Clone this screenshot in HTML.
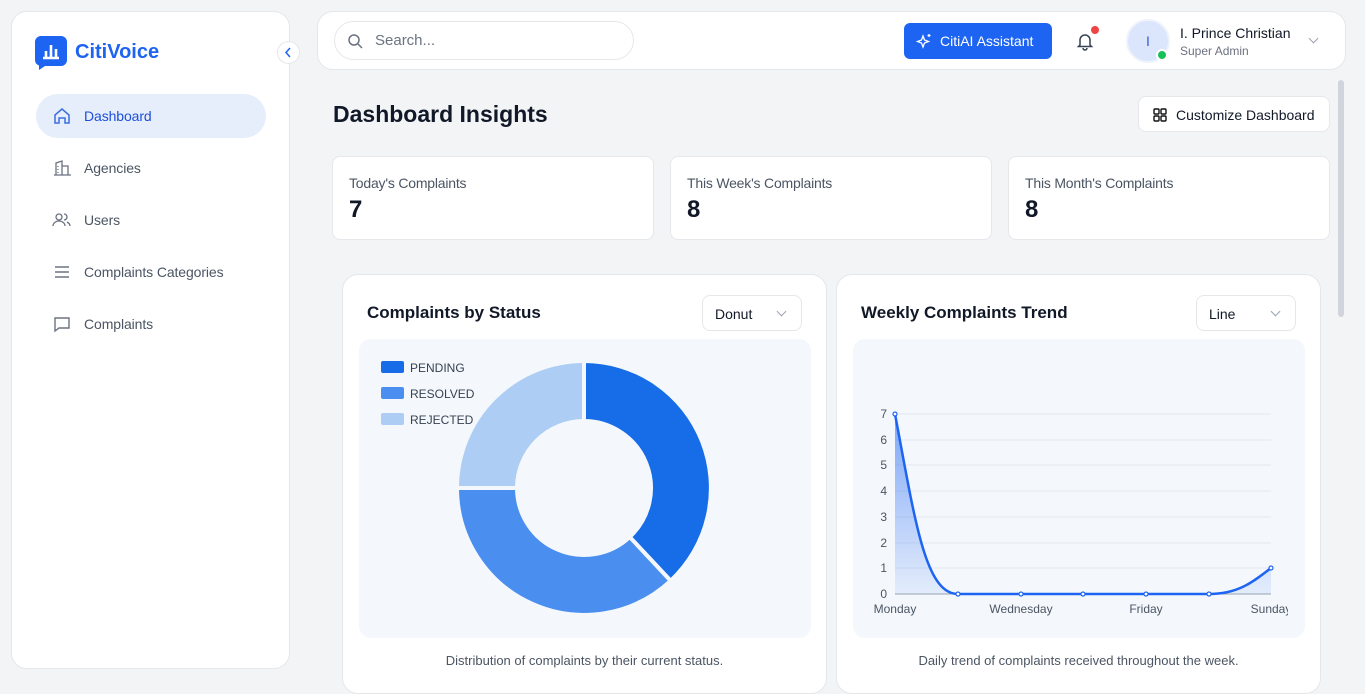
<!DOCTYPE html>
<html><head><meta charset="utf-8"><style>
*{box-sizing:border-box;margin:0;padding:0}
body{width:1365px;height:679px;overflow:hidden;background:#f3f4f6;font-family:"Liberation Sans",sans-serif;color:#111827;position:relative}
.card{position:absolute;background:#fff;border:1px solid #e5e7eb}
.side{left:11px;top:11px;width:279px;height:658px;border-radius:16px}
.nav{position:absolute;left:24px;width:230px;height:44px;border-radius:22px;display:flex;align-items:center;padding-left:16px;font-size:14px;color:#4b5563;letter-spacing:-0.1px}
.nav svg{margin-right:12px}
.nav.act{background:#e6eefc;color:#1d4ed8}
.top{left:317px;top:11px;width:1029px;height:59px;border-radius:16px}
.stat{top:156px;height:84px;width:322px;border-radius:8px;padding:18px 16px}
.stat .l{font-size:14px;color:#4b5563;letter-spacing:-0.2px}
.stat .v{font-size:24px;font-weight:bold;margin-top:5px}
.ch{top:274px;width:485px;height:420px;border-radius:16px}
.ch h3{position:absolute;left:24px;top:28px;font-size:17px}
.sel{position:absolute;top:20px;right:24px;width:100px;height:36px;border:1px solid #e5e7eb;border-radius:8px;font-size:14px;padding:10px 12px}
.sel:after{content:"";position:absolute;right:16px;top:12px;width:6px;height:6px;border-right:1.3px solid #9ca3af;border-bottom:1.3px solid #9ca3af;transform:rotate(45deg)}
.inner{position:absolute;left:16px;top:64px;width:452px;height:299px;background:#f4f8fc;border-radius:12px}
.cap{position:absolute;top:378px;width:100%;text-align:center;font-size:13px;color:#4b5563}
</style></head><body>
<div class="card side">
 <svg style="position:absolute;left:23px;top:24px" width="32" height="34" viewBox="0 0 32 34"><path d="M6 0h20a6 6 0 0 1 6 6v18a6 6 0 0 1-6 6H10l-6 4v-4.5A6 6 0 0 1 0 24V6a6 6 0 0 1 6-6z" fill="#1d64f2"/><path d="M8 22h16M11 21v-6M16 21V9M21 21v-8" stroke="#fff" stroke-width="2.6"/></svg>
 <div style="position:absolute;left:63px;top:29px;font-size:20px;font-weight:bold;color:#1d64f2">CitiVoice</div>
 <div style="position:absolute;left:265px;top:29px;width:23px;height:23px;border-radius:50%;background:#fff;border:1px solid #e5e7eb"><svg width="21" height="21"><path d="M12 6l-4 4.5 4 4.5" fill="none" stroke="#1d64f2" stroke-width="1.5"/></svg></div>
 <div class="nav act" style="top:82px"><svg width="20" height="20" viewBox="0 0 20 20" fill="none" stroke="#3b6fe0" stroke-width="1.5"><path d="M3 9l7-6 7 6v8h-4v-5H7v5H3z"/></svg>Dashboard</div>
 <div class="nav" style="top:134px"><svg width="20" height="20" viewBox="0 0 20 20" fill="none" stroke="#6b7280" stroke-width="1.3"><path d="M2 17h17M4 17V5l6-2v14M10 8h6v9M6 8v1M6 11v1M6 14v1"/></svg>Agencies</div>
 <div class="nav" style="top:186px"><svg width="20" height="20" viewBox="0 0 20 20" fill="none" stroke="#6b7280" stroke-width="1.3"><circle cx="7" cy="7" r="3"/><path d="M1 16c0-3 3-5 6-5s6 2 6 5M12 4a3 3 0 0 1 0 6M15 12c2 1 3 2 3 4"/></svg>Users</div>
 <div class="nav" style="top:238px"><svg width="20" height="20" viewBox="0 0 20 20" fill="none" stroke="#6b7280" stroke-width="1.5"><path d="M3 5h14M3 10h14M3 15h14"/></svg>Complaints Categories</div>
 <div class="nav" style="top:290px"><svg width="20" height="20" viewBox="0 0 20 20" fill="none" stroke="#6b7280" stroke-width="1.4"><path d="M3 4h14v10H7l-4 3z"/></svg>Complaints</div>
</div>
<div class="card top">
 <div style="position:absolute;left:16px;top:9px;width:300px;height:39px;border:1px solid #e5e7eb;border-radius:20px;padding:10px 0 0 40px;font-size:15px;color:#6b7280">Search...<svg style="position:absolute;left:12px;top:11px" width="16" height="16" fill="none" stroke="#6b7280" stroke-width="1.5"><circle cx="7" cy="7" r="5"/><path d="M11 11l4 4"/></svg></div>
 <div style="position:absolute;left:586px;top:11px;width:148px;height:36px;background:#1d64f2;border-radius:6px;color:#fff;font-size:14px;padding:10px 0 0 36px">CitiAI Assistant<svg style="position:absolute;left:12px;top:10px" width="16" height="16" fill="none" stroke="#fff" stroke-width="1.3"><path d="M7 3l1.5 4 4 1.5-4 1.5L7 14l-1.5-4-4-1.5 4-1.5zM13 1v3M11.5 2.5h3"/></svg></div>
 <svg style="position:absolute;left:758px;top:19px" width="18" height="20" fill="none" stroke="#374151" stroke-width="1.5"><path d="M4 14V9a5 5 0 0 1 10 0v5l1.5 1.5h-13zM7 17a2 2 0 0 0 4 0"/></svg>
 <div style="position:absolute;left:773px;top:14px;width:8px;height:8px;border-radius:50%;background:#ef4444"></div>
 <div style="position:absolute;left:808px;top:7px;width:44px;height:44px;border-radius:50%;background:#dbe6fd;border:2px solid #eef2fb;text-align:center;line-height:40px;font-size:14px;color:#3b5bdb">I</div>
 <div style="position:absolute;left:838px;top:37px;width:12px;height:12px;border-radius:50%;background:#16c15a;border:2px solid #fff"></div>
 <div style="position:absolute;left:862px;top:13px;font-size:14px">I. Prince Christian</div>
 <div style="position:absolute;left:862px;top:32px;font-size:12px;color:#6b7280">Super Admin</div>
 <div style="position:absolute;left:992px;top:23px;width:7px;height:7px;border-right:1.3px solid #9ca3af;border-bottom:1.3px solid #9ca3af;transform:rotate(45deg)"></div>
</div>
<div style="position:absolute;left:1338px;top:80px;width:6px;height:237px;border-radius:3px;background:#d1d5db"></div>
<div style="position:absolute;left:333px;top:101px;font-size:23px;font-weight:bold">Dashboard Insights</div>
<div class="card" style="left:1138px;top:96px;width:192px;height:36px;border-radius:8px;font-size:14px;padding:10px 0 0 37px">Customize Dashboard<svg style="position:absolute;left:14px;top:11px" width="14" height="14" fill="none" stroke="#111" stroke-width="1.4"><rect x="1" y="1" width="5" height="5" rx="1"/><rect x="8" y="1" width="5" height="5" rx="1"/><rect x="1" y="8" width="5" height="5" rx="1"/><rect x="8" y="8" width="5" height="5" rx="1"/></svg></div>
<div class="card stat" style="left:332px"><div class="l">Today's Complaints</div><div class="v">7</div></div>
<div class="card stat" style="left:670px"><div class="l">This Week's Complaints</div><div class="v">8</div></div>
<div class="card stat" style="left:1008px"><div class="l">This Month's Complaints</div><div class="v">8</div></div>
<div class="card ch" style="left:342px"><h3>Complaints by Status</h3><div class="sel">Donut</div><div class="inner"></div><div class="cap">Distribution of complaints by their current status.</div></div>
<div class="card ch" style="left:836px"><h3>Weekly Complaints Trend</h3><div class="sel">Line</div><div class="inner"></div><div class="cap">Daily trend of complaints received throughout the week.</div></div>
<svg style="position:absolute;left:0;top:0" width="1365" height="679" font-family="Liberation Sans,sans-serif">
 <g stroke="#f4f8fc" stroke-width="4" stroke-linejoin="round">
  <path d="M584 361A127 127 0 0 1 670.6 580.8L629.7 537A67 67 0 0 0 584 421Z" fill="#176ce8"/>
  <path d="M670.6 580.8A127 127 0 0 1 457 488L517 488A67 67 0 0 0 629.7 537Z" fill="#4a8ff0"/>
  <path d="M457 488A127 127 0 0 1 584 361L584 421A67 67 0 0 0 517 488Z" fill="#aecdf5"/>
 </g>
 <g font-size="12" fill="#374151">
  <rect x="381" y="361" width="23" height="12" rx="2" fill="#176ce8"/><text x="410" y="372">PENDING</text>
  <rect x="381" y="387" width="23" height="12" rx="2" fill="#4a8ff0"/><text x="410" y="398">RESOLVED</text>
  <rect x="381" y="413" width="23" height="12" rx="2" fill="#aecdf5"/><text x="410" y="424">REJECTED</text>
 </g>
 <g stroke="#e3e8f0" stroke-width="1">
  <path d="M895 414H1271M895 440H1271M895 465H1271M895 491H1271M895 517H1271M895 543H1271M895 568H1271"/>
 </g>
 <path d="M895 594H1271" stroke="#9ca3af"/>
 <defs><linearGradient id="g" x1="0" y1="0" x2="0" y2="1"><stop offset="0" stop-color="#1d64f2" stop-opacity=".55"/><stop offset="1" stop-color="#1d64f2" stop-opacity=".08"/></linearGradient></defs>
 <path d="M895 414C915 520 925 594 958 594H1209C1240 594 1255 580 1271 568V594H895Z" fill="url(#g)"/>
 <path d="M895 414C915 520 925 594 958 594H1209C1240 594 1255 580 1271 568" fill="none" stroke="#1d64f2" stroke-width="2.5"/>
 <g fill="#fff" stroke="#1d64f2" stroke-width="1.2"><circle cx="895" cy="414" r="2"/><circle cx="958" cy="594" r="2"/><circle cx="1021" cy="594" r="2"/><circle cx="1083" cy="594" r="2"/><circle cx="1146" cy="594" r="2"/><circle cx="1209" cy="594" r="2"/><circle cx="1271" cy="568" r="2"/></g>
 <g font-size="12" fill="#4b5563" text-anchor="end">
  <text x="887" y="418">7</text><text x="887" y="444">6</text><text x="887" y="469">5</text><text x="887" y="495">4</text><text x="887" y="521">3</text><text x="887" y="547">2</text><text x="887" y="572">1</text><text x="887" y="598">0</text>
 </g>
 <g font-size="12" fill="#4b5563" text-anchor="middle">
  <text x="895" y="613">Monday</text><text x="1021" y="613">Wednesday</text><text x="1146" y="613">Friday</text><text x="1271" y="613">Sunday</text>
 </g>
 <rect x="1288" y="600" width="16" height="20" fill="#f4f8fc"/>
</svg>
</body></html>
